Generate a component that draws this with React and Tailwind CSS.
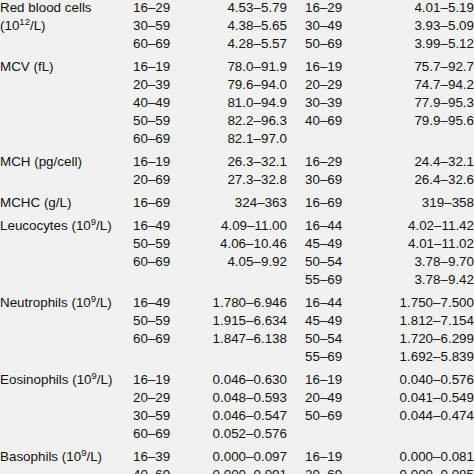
import React from 'react';

const Sup = ({ children }) => <sup className="text-[9.5px]">{children}</sup>;

const groups = [
  {
    label: (
      <>
        Red blood cells
        <br />
        (10<Sup>12</Sup>/L)
      </>
    ),
    rows: [
      ['16–29', '4.53–5.79', '16–29', '4.01–5.19'],
      ['30–59', '4.38–5.65', '30–49', '3.93–5.09'],
      ['60–69', '4.28–5.57', '50–69', '3.99–5.12'],
    ],
  },
  {
    label: 'MCV (fL)',
    rows: [
      ['16–19', '78.0–91.9', '16–19', '75.7–92.7'],
      ['20–39', '79.6–94.0', '20–29', '74.7–94.2'],
      ['40–49', '81.0–94.9', '30–39', '77.9–95.3'],
      ['50–59', '82.2–96.3', '40–69', '79.9–95.6'],
      ['60–69', '82.1–97.0', '', ''],
    ],
  },
  {
    label: 'MCH (pg/cell)',
    rows: [
      ['16–19', '26.3–32.1', '16–29', '24.4–32.1'],
      ['20–69', '27.3–32.8', '30–69', '26.4–32.6'],
    ],
  },
  {
    label: 'MCHC (g/L)',
    rows: [['16–69', '324–363', '16–69', '319–358']],
  },
  {
    label: (
      <>
        Leucocytes (10<Sup>9</Sup>/L)
      </>
    ),
    rows: [
      ['16–49', '4.09–11.00', '16–44', '4.02–11.42'],
      ['50–59', '4.06–10.46', '45–49', '4.01–11.02'],
      ['60–69', '4.05–9.92', '50–54', '3.78–9.70'],
      ['', '', '55–69', '3.78–9.42'],
    ],
  },
  {
    label: (
      <>
        Neutrophils (10<Sup>9</Sup>/L)
      </>
    ),
    rows: [
      ['16–49', '1.780–6.946', '16–44', '1.750–7.500'],
      ['50–59', '1.915–6.634', '45–49', '1.812–7.154'],
      ['60–69', '1.847–6.138', '50–54', '1.720–6.299'],
      ['', '', '55–69', '1.692–5.839'],
    ],
  },
  {
    label: (
      <>
        Eosinophils (10<Sup>9</Sup>/L)
      </>
    ),
    rows: [
      ['16–19', '0.046–0.630', '16–19', '0.040–0.576'],
      ['20–29', '0.048–0.593', '20–49', '0.041–0.549'],
      ['30–59', '0.046–0.547', '50–69', '0.044–0.474'],
      ['60–69', '0.052–0.576', '', ''],
    ],
  },
  {
    label: (
      <>
        Basophils (10<Sup>9</Sup>/L)
      </>
    ),
    rows: [
      ['16–39', '0.000–0.097', '16–19', '0.000–0.081'],
      ['40–69', '0.000–0.091', '20–69', '0.000–0.085'],
    ],
  },
];

function Group({ label, rows }) {
  return (
    <div className="flex pt-[5px] first:pt-0">
      <div className="w-[133px] shrink-0 leading-[18px]">{label}</div>
      <div className="flex flex-col">
        {rows.map((r, i) => (
          <div key={i} className="flex h-[18px] items-center">
            <span className="w-[50px]">{r[0]}</span>
            <span className="w-[104px] text-right">{r[1]}</span>
            <span className="w-[18px]" />
            <span className="w-[50px]">{r[2]}</span>
            <span className="w-[119px] text-right">{r[3]}</span>
          </div>
        ))}
      </div>
    </div>
  );
}

export default function App() {
  return (
    <div className="w-[474px] h-[474px] overflow-hidden bg-[#f1f1f1] text-[#121212]">
      <div
        className="mt-[-1px] w-[476px] text-[13.4px] whitespace-nowrap"
        style={{ fontFamily: '"Liberation Sans", Arial, sans-serif' }}
      >
        {groups.map((g, i) => (
          <Group key={i} label={g.label} rows={g.rows} />
        ))}
      </div>
    </div>
  );
}
